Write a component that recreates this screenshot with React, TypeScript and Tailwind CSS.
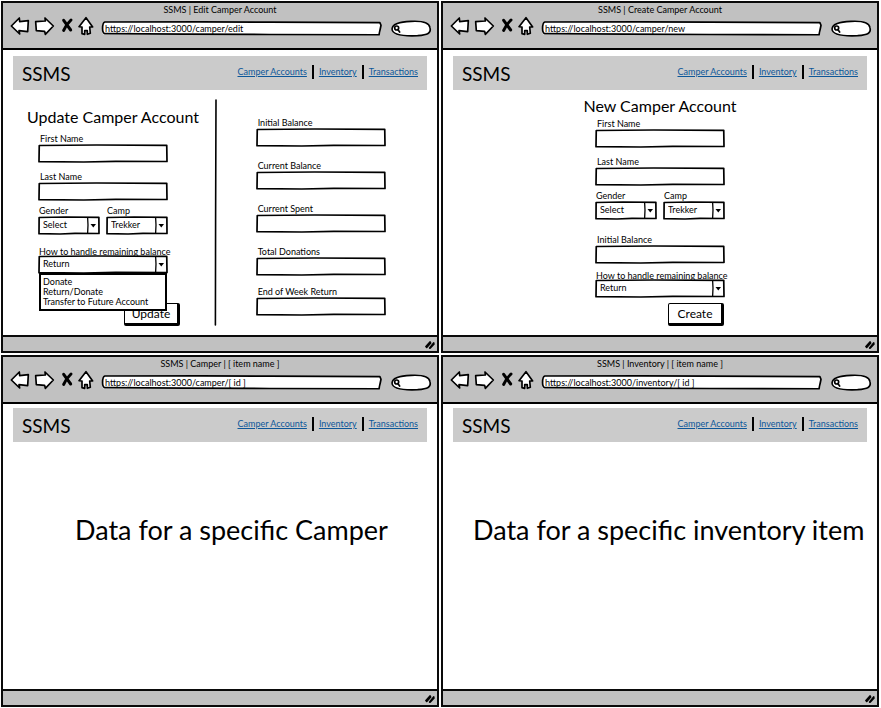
import { useId, type ReactNode } from "react";

/* Hand-drawn outline stretched over its parent box. */
function SketchOutline({ d = "M0.2 3 L45 0 L99.8 2 L100 97 L60 96 L35 100 L0 98 Z" }: { d?: string }) {
  return (
    <svg
      className="pointer-events-none absolute inset-0 h-full w-full overflow-visible"
      viewBox="0 0 100 100"
      preserveAspectRatio="none"
      aria-hidden="true"
    >
      <path d={d} fill="none" stroke="#000" strokeWidth="1.7" strokeLinejoin="round" vectorEffect="non-scaling-stroke" />
    </svg>
  );
}

function ToolButton({ label, width, viewBox, children }: { label: string; width: string; viewBox: string; children: ReactNode }) {
  return (
    <button type="button" aria-label={label} className={`h-[19px] shrink-0 ${width}`}>
      <svg
        viewBox={viewBox}
        className="h-full w-full overflow-visible"
        fill="#fff"
        stroke="#000"
        strokeWidth="5"
        strokeLinejoin="round"
        strokeLinecap="round"
      >
        {children}
      </svg>
    </button>
  );
}

function Chrome({ title, url }: { title: string; url: string }) {
  return (
    <div className="h-[47px] shrink-0 border-b-2 border-black bg-[#c1c1c1]">
      <div className="h-[14px] text-center text-[9px] leading-[14px]">{title}</div>
      <div className="flex h-[19px] items-center pr-[6px] pl-2">
        <ToolButton label="Back" width="w-[18px]" viewBox="33 50 54 57">
          <path d="M34 77 L58 53 L59 64 L85 61 L83 94 L57 91 L59 101 Z" />
        </ToolButton>
        <div className="w-[6px]" />
        <ToolButton label="Forward" width="w-[19px]" viewBox="105 50 57 57">
          <path d="M160 77 L135 53 L136 62 L107 64 L109 91 L134 93 L136 102 Z" />
        </ToolButton>
        <div className="w-[7px]" />
        <ToolButton label="Stop" width="w-[12px]" viewBox="183 50 36 57">
          <path d="M191 60 L212 89 M213 59 Q199 72 191 90" fill="none" strokeWidth="9" />
        </ToolButton>
        <div className="w-[5px]" />
        <ToolButton label="Home" width="w-[16px]" viewBox="234 50 48 57">
          <path d="M258 52 L237 79 L246 80 L246 100 L254 102 L254 91 L262 91 L262 102 L271 99 L269 80 L278 80 Z" />
        </ToolButton>
        <div className="relative mt-1 ml-2 h-[13px] flex-1">
          <input
            aria-label="Address"
            defaultValue={url}
            className="block h-full w-full rounded-sm bg-white pl-[3px] text-[9px] leading-[13px] outline-none"
          />
          <SketchOutline d="M1 0 L35 -1 L60 1 L99.6 5 L100 25 L99.3 98 L60 96 L30 94 L1 90 Q0.2 85 0.2 50 Q0.2 5 1 0 Z" />
        </div>
        <div className="relative mt-[3px] ml-[10px] h-[15px] w-10 shrink-0">
          <input aria-label="Search" className="block h-full w-full rounded-[50%] bg-white pl-3 text-[9px] outline-none" />
          <svg
            viewBox="0 0 120 45"
            className="pointer-events-none absolute inset-0 h-full w-full overflow-visible"
            fill="none"
            stroke="#000"
            strokeWidth="5"
            strokeLinecap="round"
          >
            <path fill="#fff" d="M3 24 C4 7 30 2 60 1 C98 -1 115 6 117 20 C121 37 110 41 80 44 C35 46 4 41 3 24 Z" />
            <circle cx="17" cy="21" r="6" />
            <path d="M21 26 L26 33" />
          </svg>
        </div>
      </div>
    </div>
  );
}

function AppHeader() {
  return (
    <header className="mx-[10px] flex h-[34px] shrink-0 items-center justify-between bg-[#cbcbcb] px-[9px]">
      <div className="text-[19px] leading-none">SSMS</div>
      <nav className="flex items-center pb-[2px] text-[9px] leading-3 text-[#0d5799]">
        <a href="#accounts" className="underline">Camper Accounts</a>
        <span className="mx-[5px] h-[14px] w-[2px] bg-black" />
        <a href="#inventory" className="underline">Inventory</a>
        <span className="mx-[5px] h-[14px] w-[2px] bg-black" />
        <a href="#transactions" className="underline">Transactions</a>
      </nav>
    </header>
  );
}

function BrowserWindow({ title, url, children, inset }: { title: string; url: string; children: ReactNode; inset: string }) {
  return (
    <section className="flex flex-col border-2 border-[#0a0a0a] bg-white">
      <Chrome title={title} url={url} />
      <div className={`flex flex-1 flex-col ${inset}`}>
        <AppHeader />
        {children}
      </div>
      <footer className="flex h-4 shrink-0 items-center justify-end border-t-2 border-[#0a0a0a] bg-[#c1c1c1] pr-[2px]">
        <svg viewBox="0 0 30 27" className="h-[9px] w-[10px]" stroke="#000" strokeWidth="5" strokeLinecap="round">
          <path d="M3 20 L15 6 M5 22 L17 9 M14 24 L26 9 M16 24 L27 12" />
        </svg>
      </footer>
    </section>
  );
}

function TextField({ label }: { label: string }) {
  const id = useId();
  return (
    <div className="w-32">
      <label htmlFor={id} className="block pl-px text-[9px] leading-3">{label}</label>
      <div className="relative h-[17px]">
        <input id={id} className="block h-full w-full bg-white px-1 text-[9px] outline-none" />
        <SketchOutline />
      </div>
    </div>
  );
}

function SelectField({
  label,
  options,
  width,
  tight = false,
  open = false,
}: {
  label: string;
  options: string[];
  width: string;
  tight?: boolean;
  open?: boolean;
}) {
  const id = useId();
  return (
    <div className={width}>
      <label htmlFor={id} className={`block text-[9px] whitespace-nowrap ${tight ? "leading-2" : "leading-3"}`}>
        {label}
      </label>
      <div className="relative h-[17px]">
        <select id={id} className="block h-full w-full appearance-none bg-white pr-3 pb-[2px] pl-1 text-[9px] outline-none">
          {options.map((o) => (
            <option key={o}>{o}</option>
          ))}
        </select>
        <SketchOutline />
        <svg viewBox="0 0 12 17" className="pointer-events-none absolute top-0 right-0 h-full w-3">
          <path d="M0.6 0 L1 8 L0.6 17" fill="none" stroke="#000" strokeWidth="1.3" />
          <path d="M3.5 7 L9 7 L6.3 10.5 Z" />
        </svg>
        {open && (
          <ul
            role="listbox"
            aria-label={label}
            className="absolute top-full left-0 z-10 w-full border-2 border-black bg-white pt-[2px] pb-[2px] pl-[2px] text-[9px] leading-[10px] whitespace-nowrap"
          >
            {["Donate", "Return/Donate", "Transfer to Future Account"].map((o) => (
              <li key={o} role="option" aria-selected="false">{o}</li>
            ))}
          </ul>
        )}
      </div>
    </div>
  );
}

function SketchButton({ children }: { children: ReactNode }) {
  return (
    <button
      type="button"
      className="h-[23px] w-14 rounded-[2px] border border-r-[3px] border-b-[3px] border-black bg-white text-xs leading-none"
    >
      {children}
    </button>
  );
}

const balanceOptions = ["Return", "Donate", "Return/Donate", "Transfer to Future Account"];

function CamperIdentity() {
  return (
    <>
      <TextField label="First Name" />
      <div className="mt-[9px]">
        <TextField label="Last Name" />
      </div>
      <div className="mt-[5px] flex gap-2">
        <SelectField label="Gender" options={["Select"]} width="w-[60px]" />
        <SelectField label="Camp" options={["Trekker"]} width="w-[60px]" />
      </div>
    </>
  );
}

function EditCamper() {
  return (
    <form className="flex flex-1">
      <div className="w-[49%] pt-4">
        <h1 className="pl-6 text-base leading-[22px] whitespace-nowrap">Update Camper Account</h1>
        <div className="pt-[5px] pl-9">
          <CamperIdentity />
          <div className="mt-[14px]">
            <SelectField label="How to handle remaining balance" options={balanceOptions} width="w-32" tight open />
          </div>
          <div className="mt-[30px] flex pl-[85px]">
            <SketchButton>Update</SketchButton>
          </div>
        </div>
      </div>
      <svg viewBox="0 0 2 225" preserveAspectRatio="none" className="mt-[10px] -ml-px h-[225px] w-[2px] shrink-0 overflow-visible" aria-hidden="true">
        <path d="M1 0 L0.6 120 L0.4 225" fill="none" stroke="#000" strokeWidth="1.6" strokeLinecap="round" />
      </svg>
      <div className="flex flex-col gap-[14px] pt-[27px] pl-10">
        <TextField label="Initial Balance" />
        <TextField label="Current Balance" />
        <TextField label="Current Spent" />
        <TextField label="Total Donations" />
        <div className="-mt-[3px]">
          <TextField label="End of Week Return" />
        </div>
      </div>
    </form>
  );
}

function NewCamper() {
  return (
    <form className="flex flex-1 flex-col items-center pt-[5px]">
      <h1 className="text-base leading-[22px] whitespace-nowrap">New Camper Account</h1>
      <div className="w-32 pt-px">
        <CamperIdentity />
        <div className="mt-[15px]">
          <TextField label="Initial Balance" />
        </div>
        <div className="mt-[9px]">
          <SelectField label="How to handle remaining balance" options={balanceOptions} width="w-32" tight />
        </div>
        <div className="mt-[6px] flex justify-end">
          <SketchButton>Create</SketchButton>
        </div>
      </div>
    </form>
  );
}

export default function App() {
  return (
    <main className="grid min-h-screen grid-cols-2 grid-rows-2 gap-[2px] bg-white py-px pr-[2px] pl-px font-['Lato','Noto_Sans',sans-serif] text-black">
      <BrowserWindow title="SSMS | Edit Camper Account" url="https://localhost:3000/camper/edit" inset="pt-[6px]">
        <EditCamper />
      </BrowserWindow>
      <BrowserWindow title="SSMS | Create Camper Account" url="https://localhost:3000/camper/new" inset="pt-[6px]">
        <NewCamper />
      </BrowserWindow>
      <BrowserWindow title="SSMS | Camper | [ item name ]" url="https://localhost:3000/camper/[ id ]" inset="pt-1">
        <h1 className="pt-[72px] pl-[72px] text-[27px] leading-8 whitespace-nowrap">Data for a specific Camper</h1>
      </BrowserWindow>
      <BrowserWindow title="SSMS | Inventory | [ item name ]" url="https://localhost:3000/inventory/[ id ]" inset="pt-1">
        <h1 className="pt-[72px] pl-[30px] text-[27px] leading-8 whitespace-nowrap">Data for a specific inventory item</h1>
      </BrowserWindow>
    </main>
  );
}
